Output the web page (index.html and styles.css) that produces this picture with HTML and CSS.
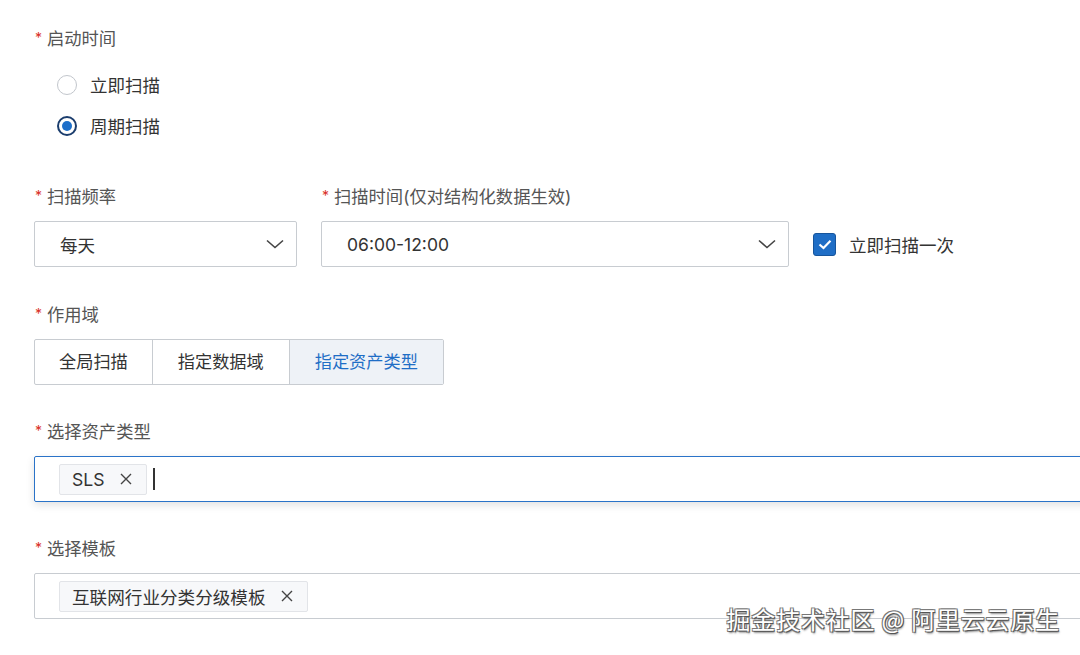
FILE: index.html
```html
<!DOCTYPE html>
<html lang="zh-CN">
<head>
    <meta charset="UTF-8">
    <title>扫描任务</title>
    <link rel="stylesheet" href="styles.css">
</head>
<body>
    <form class="scan-form">
        <div class="field">
            <div class="label"><span class="req">*</span>启动时间</div>
            <div class="radio-group">
                <label class="radio"><span class="dot"></span>立即扫描</label>
                <label class="radio checked"><span class="dot"></span>周期扫描</label>
            </div>
        </div>

        <div class="field-row">
            <div class="field">
                <div class="label"><span class="req">*</span>扫描频率</div>
                <div class="select freq">
                    <span>每天</span>
                    <svg width="18" height="10" viewBox="0 0 18 10"><path d="M1 1.5 L9 8.5 L17 1.5" fill="none" stroke="#444" stroke-width="1.6"/></svg>
                </div>
            </div>
            <div class="field">
                <div class="label"><span class="req">*</span>扫描时间(仅对结构化数据生效)</div>
                <div class="select time">
                    <span>06:00-12:00</span>
                    <svg width="18" height="10" viewBox="0 0 18 10"><path d="M1 1.5 L9 8.5 L17 1.5" fill="none" stroke="#444" stroke-width="1.6"/></svg>
                </div>
            </div>
            <label class="checkbox">
                <span class="box"><svg width="14" height="11" viewBox="0 0 14 11"><path d="M1.5 5.5 L5.5 9 L12.5 1.8" fill="none" stroke="#fff" stroke-width="2.2"/></svg></span>
                立即扫描一次
            </label>
        </div>

        <div class="field">
            <div class="label"><span class="req">*</span>作用域</div>
            <div class="segments">
                <span class="seg">全局扫描</span>
                <span class="seg">指定数据域</span>
                <span class="seg active">指定资产类型</span>
            </div>
        </div>

        <div class="field">
            <div class="label"><span class="req">*</span>选择资产类型</div>
            <div class="tag-input focused">
                <span class="tag">SLS<svg class="close" width="12" height="12" viewBox="0 0 12 12"><path d="M1 1 L11 11 M11 1 L1 11" stroke="#444" stroke-width="1.4"/></svg></span>
                <span class="caret"></span>
            </div>
        </div>

        <div class="field">
            <div class="label"><span class="req">*</span>选择模板</div>
            <div class="tag-input">
                <span class="tag">互联网行业分类分级模板<svg class="close" width="12" height="12" viewBox="0 0 12 12"><path d="M1 1 L11 11 M11 1 L1 11" stroke="#444" stroke-width="1.4"/></svg></span>
            </div>
        </div>
    </form>

    <div class="watermark">掘金技术社区 @ 阿里云云原生</div>
</body>
</html>
```

FILE: styles.css
```css
body, html {
    margin: 0;
    height: 100%;
    overflow: hidden;
    background: #fff;
    font-family: Inter, "Noto Sans CJK SC", sans-serif;
    color: #333;
}

.scan-form {
    padding: 27px 0 0 34px;
    margin-right: -30px;
}

.field {
    margin-bottom: 35px;
}

.field-row {
    display: flex;
    align-items: flex-end;
}
.field-row .field {
    margin-right: 24px;
    margin-bottom: 36px;
}

.label {
    font-size: 17.3px;
    line-height: 24px;
    color: #555;
    margin-bottom: 11px;
}
.req {
    color: #d93026;
    font-size: 14px;
    margin-right: 6px;
    position: relative;
    top: -2px;
    left: 1px;
}

/* radios */
.radio-group {
    padding: 1px 0 0 23px;
    margin-bottom: 39px;
}
.radio {
    display: flex;
    align-items: center;
    height: 41px;
    font-size: 17.5px;
}
.radio .dot {
    width: 18px;
    height: 18px;
    border: 1px solid #c2c6cc;
    border-radius: 50%;
    margin-right: 13px;
    position: relative;
}
.radio.checked .dot {
    width: 16px;
    height: 16px;
    border: 2px solid #1b3d6d;
}
.radio.checked .dot::after {
    content: "";
    position: absolute;
    left: 3px;
    top: 3px;
    width: 10px;
    height: 10px;
    border-radius: 50%;
    background: #1d6fca;
}

/* selects */
.select {
    height: 44px;
    border: 1px solid #c8ccd1;
    border-radius: 2px;
    display: flex;
    align-items: center;
    justify-content: space-between;
    padding: 0 12px 0 25px;
    font-size: 17.5px;
}
.select.freq {
    width: 224px;
}
.select.time {
    width: 429px;
}

.checkbox {
    display: flex;
    align-items: center;
    height: 46px;
    font-size: 17.5px;
    margin-bottom: 36px;
}
.checkbox .box {
    width: 21px;
    height: 21px;
    background: #1f6ec6;
    border: 1px solid #17559c;
    border-radius: 3px;
    display: flex;
    align-items: center;
    justify-content: center;
    margin-right: 13px;
}

/* segmented control */
.segments {
    display: inline-flex;
    border: 1px solid #c8ccd1;
    border-radius: 2px;
}
.seg {
    height: 44px;
    line-height: 44px;
    padding: 0 25px;
    font-size: 17.2px;
    border-left: 1px solid #c8ccd1;
}
.seg:first-child {
    border-left: none;
    padding: 0 24px;
}
.seg.active {
    background: #eef2f7;
    color: #1f6ec6;
    padding: 0 25px;
}

/* tag inputs */
.tag-input {
    height: 44px;
    border: 1px solid #c8ccd1;
    border-radius: 2px;
    display: flex;
    align-items: center;
    padding-left: 24px;
}
.tag-input.focused {
    border-color: #2a73c8;
    box-shadow: 0 3px 8px rgba(0, 0, 0, 0.12);
}
.tag {
    height: 29px;
    background: #f7f8fa;
    border: 1px solid #e2e4e8;
    border-radius: 2px;
    padding: 0 14px 0 12px;
    font-size: 17.6px;
    display: flex;
    align-items: center;
}
.tag .close {
    margin-left: 15px;
}
.caret {
    width: 2px;
    height: 22px;
    background: #333;
    margin-left: 6px;
}

/* overlay stamp */
.watermark {
    position: absolute;
    right: 20px;
    bottom: 19px;
    font-family: "Noto Sans CJK SC", sans-serif;
    font-size: 24px;
    color: #fff;
    letter-spacing: 0.8px;
    text-shadow: 1px 1px 0 #555, -1px -1px 0 #777, 1px -1px 0 #777, -1px 1px 0 #777, 1px 2px 2px rgba(0, 0, 0, 0.5);
}
```
